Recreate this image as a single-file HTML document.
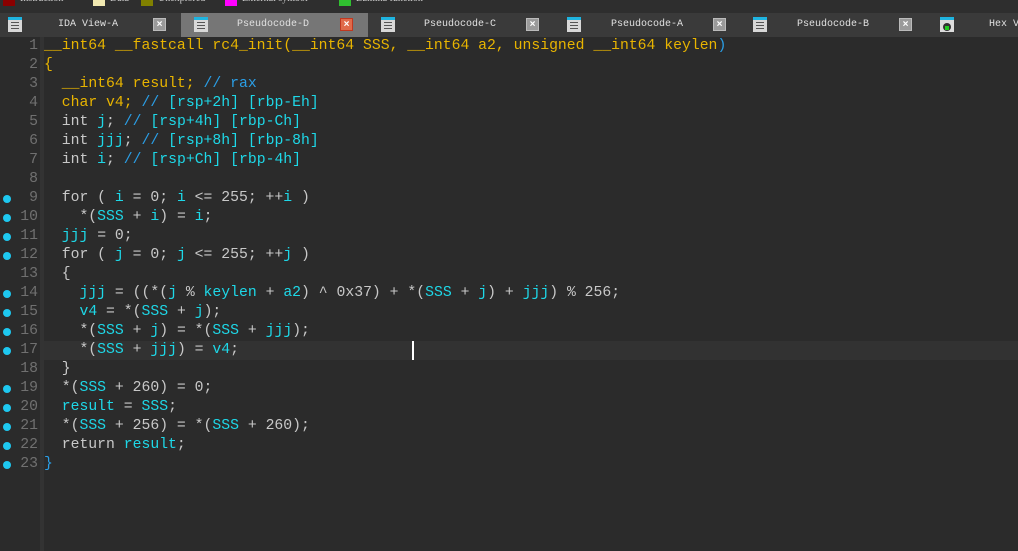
<!DOCTYPE html>
<html><head><meta charset="utf-8"><style>
*{margin:0;padding:0;box-sizing:border-box}
body{width:1018px;height:551px;background:#2b2b2b;overflow:hidden;position:relative;font-family:"Liberation Mono",monospace}
#legend{position:absolute;left:0;top:0;width:1018px;height:13px;background:#2e2e2e;overflow:hidden}
#legend span{position:absolute;top:-7px;font:10px "Liberation Serif",serif;color:#ccc;white-space:nowrap}
#legend i{position:absolute;top:0;height:6px;width:12px}
#tabs{position:absolute;left:0;top:13px;width:1018px;height:24px;background:#3a3a3a}
.tab{position:absolute;top:0;height:24px}
.tab.act{background:#767676}
.ic{position:absolute;top:4px;width:14px;height:15px;background:#d8d8d8;border-top:3px solid #1fb4e0}
.ic b{position:absolute;left:3px;width:8px;height:1px;background:#555}
.tt{position:absolute;top:6px;font:10px "Liberation Mono",monospace;color:#e0e0e0;white-space:nowrap}
.cl{position:absolute;top:5px;width:13px;height:13px;background:#9a9a9a;border:1px solid #bbb;color:#fff;font:bold 10px/11px sans-serif;text-align:center}
.cl.r{background:#e06a4a;border-color:#c03820}
#gut{position:absolute;left:40px;top:37px;width:4px;height:514px;background:#333}
#hl{position:absolute;left:44px;top:341px;width:974px;height:19px;background:#323232}
#cur{position:absolute;left:412px;top:341px;width:2px;height:19px;background:#fff}
.ln{position:absolute;left:0;width:38px;text-align:right;font-size:14.77px;color:#707070;line-height:19px}
.dot{position:absolute;left:3px;width:8px;height:8px;border-radius:50%;background:#1ec8f0}
.code{position:absolute;left:44px;font-size:14.77px;line-height:19px;white-space:pre;color:#c8c8c8}
.y{color:#e8b400}.c{color:#1ed8e8}.m{color:#2a9ee6}
</style></head><body>
<div id="legend">
<i style="left:3px;background:#8b0000"></i><span style="left:20px">Instruction</span>
<i style="left:93px;background:#f0e8b0"></i><span style="left:110px">Data</span>
<i style="left:141px;background:#808000"></i><span style="left:158px">Unexplored</span>
<i style="left:225px;background:#ff00ff"></i><span style="left:242px">External symbol</span>
<i style="left:339px;background:#30c030"></i><span style="left:356px">Lumina function</span>
</div>
<div id="tabs">
<div class="tab" style="left:0;width:180px"><div class="ic" style="left:8px"><b style="top:2px"></b><b style="top:5px"></b><b style="top:8px"></b></div><div class="tt" style="left:58px">IDA View-A</div><div class="cl" style="left:153px">×</div></div>
<div class="tab act" style="left:181px;width:187px"><div class="ic" style="left:13px"><b style="top:2px"></b><b style="top:5px"></b><b style="top:8px"></b></div><div class="tt" style="left:56px">Pseudocode-D</div><div class="cl r" style="left:159px">×</div></div>
<div class="tab" style="left:368px;width:187px"><div class="ic" style="left:13px"><b style="top:2px"></b><b style="top:5px"></b><b style="top:8px"></b></div><div class="tt" style="left:56px">Pseudocode-C</div><div class="cl" style="left:158px">×</div></div>
<div class="tab" style="left:555px;width:187px"><div class="ic" style="left:12px"><b style="top:2px"></b><b style="top:5px"></b><b style="top:8px"></b></div><div class="tt" style="left:56px">Pseudocode-A</div><div class="cl" style="left:158px">×</div></div>
<div class="tab" style="left:741px;width:187px"><div class="ic" style="left:12px"><b style="top:2px"></b><b style="top:5px"></b><b style="top:8px"></b></div><div class="tt" style="left:56px">Pseudocode-B</div><div class="cl" style="left:158px">×</div></div>
<div class="tab" style="left:928px;width:90px"><div class="ic" style="left:12px;background:#ddd"><b style="top:3px;left:3px;width:8px;height:8px;border-radius:50%;background:#333"></b><b style="top:6px;left:5px;width:4px;height:4px;background:#2c2"></b></div><div class="tt" style="left:61px">Hex View</div></div>
</div>
<div id="gut"></div>
<div id="hl"></div>
<div id="cur"></div>
<div class="ln" style="top:37px">1<br>2<br>3<br>4<br>5<br>6<br>7<br>8<br>9<br>10<br>11<br>12<br>13<br>14<br>15<br>16<br>17<br>18<br>19<br>20<br>21<br>22<br>23</div>
<div class="dot" style="top:195px"></div><div class="dot" style="top:214px"></div><div class="dot" style="top:233px"></div><div class="dot" style="top:252px"></div>
<div class="dot" style="top:290px"></div><div class="dot" style="top:309px"></div><div class="dot" style="top:328px"></div><div class="dot" style="top:347px"></div>
<div class="dot" style="top:385px"></div><div class="dot" style="top:404px"></div><div class="dot" style="top:423px"></div><div class="dot" style="top:442px"></div><div class="dot" style="top:461px"></div>
<div class="code" style="top:37px"><span class="y">__int64 __fastcall rc4_init(__int64 SSS, __int64 a2, unsigned __int64 keylen</span><span class="m">)</span>
<span class="y">{</span>
  <span class="y">__int64 result;</span> <span class="m">// rax</span>
  <span class="y">char v4;</span> <span class="m">//</span> <span class="c">[rsp+2h] [rbp-Eh]</span>
  int <span class="c">j</span>; <span class="m">//</span> <span class="c">[rsp+4h] [rbp-Ch]</span>
  int <span class="c">jjj</span>; <span class="m">//</span> <span class="c">[rsp+8h] [rbp-8h]</span>
  int <span class="c">i</span>; <span class="m">//</span> <span class="c">[rsp+Ch] [rbp-4h]</span>

  for ( <span class="c">i</span> = 0; <span class="c">i</span> &lt;= 255; ++<span class="c">i</span> )
    *(<span class="c">SSS</span> + <span class="c">i</span>) = <span class="c">i</span>;
  <span class="c">jjj</span> = 0;
  for ( <span class="c">j</span> = 0; <span class="c">j</span> &lt;= 255; ++<span class="c">j</span> )
  {
    <span class="c">jjj</span> = ((*(<span class="c">j</span> % <span class="c">keylen</span> + <span class="c">a2</span>) ^ 0x37) + *(<span class="c">SSS</span> + <span class="c">j</span>) + <span class="c">jjj</span>) % 256;
    <span class="c">v4</span> = *(<span class="c">SSS</span> + <span class="c">j</span>);
    *(<span class="c">SSS</span> + <span class="c">j</span>) = *(<span class="c">SSS</span> + <span class="c">jjj</span>);
    *(<span class="c">SSS</span> + <span class="c">jjj</span>) = <span class="c">v4</span>;
  }
  *(<span class="c">SSS</span> + 260) = 0;
  <span class="c">result</span> = <span class="c">SSS</span>;
  *(<span class="c">SSS</span> + 256) = *(<span class="c">SSS</span> + 260);
  return <span class="c">result</span>;
<span class="m">}</span></div>
</body></html>
